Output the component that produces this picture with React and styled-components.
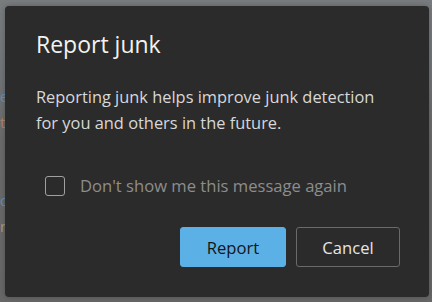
import React from 'react';
import styled, { createGlobalStyle } from 'styled-components';

const GlobalStyle = createGlobalStyle`
  html, body {
    margin: 0;
    padding: 0;
    width: 432px;
    height: 302px;
    overflow: hidden;
    background: #6c6c6c;
  }
  * { box-sizing: border-box; }
`;

const Backdrop = styled.div`
  position: relative;
  width: 432px;
  height: 302px;
  padding: 6px 3px 5px 5px;
  background: linear-gradient(180deg, #7a7d80 0px, #74777a 60px, #6b6b6b 140px, #686868 302px);
  font-family: "Open Sans", "Noto Sans", sans-serif;
`;

const BehindText = styled.span`
  position: absolute;
  left: 0;
  top: ${p => p.$top}px;
  font-size: 15px;
  color: ${p => p.$color};
  opacity: 0.8;
`;

const Dialog = styled.div`
  position: relative;
  height: 100%;
  background: #2b2b2b;
  border-radius: 4px;
  padding: 22px 29px 30px 31px;
  display: flex;
  flex-direction: column;
  box-shadow: 0 0 6px rgba(0, 0, 0, 0.25);
`;

const Title = styled.h1`
  margin: 0;
  font-size: 23px;
  font-weight: 400;
  line-height: 32px;
  color: #f2f2f2;
`;

const Message = styled.p`
  margin: 24px 0 0;
  font-size: 16.4px;
  line-height: 26px;
  color: #d8d8d8;
`;

const CheckRow = styled.label`
  display: flex;
  align-items: center;
  gap: 15px;
  margin: 38px 0 0 9px;
  font-size: 16.6px;
  color: #8d8d8d;
`;

const Box = styled.span`
  width: 20px;
  height: 20px;
  border: 1px solid #a0a0a0;
  border-radius: 3px;
`;

const Actions = styled.div`
  margin-top: auto;
  display: flex;
  justify-content: flex-end;
  gap: 10px;
`;

const Button = styled.button`
  height: 40px;
  width: ${p => p.$w}px;
  border-radius: 3px;
  font-family: inherit;
  font-size: 16.6px;
  padding: 0;
  border: 1px solid ${p => (p.$primary ? '#5bb0e6' : '#6a6a6a')};
  background: ${p => (p.$primary ? '#5bb0e6' : '#2b2b2b')};
  color: ${p => (p.$primary ? '#141414' : '#e6e6e6')};
`;

export default function App() {
  return (
    <>
      <GlobalStyle />
      <Backdrop>
        <BehindText $top={86} $color="#5c9ad0">e</BehindText>
        <BehindText $top={112} $color="#c08a6a">t</BehindText>
        <BehindText $top={190} $color="#5c9ad0">o</BehindText>
        <BehindText $top={216} $color="#b8a88a">n</BehindText>
        <Dialog>
          <Title>Report junk</Title>
          <Message>
            Reporting junk helps improve junk detection
            <br />
            for you and others in the future.
          </Message>
          <CheckRow>
            <Box />
            Don't show me this message again
          </CheckRow>
          <Actions>
            <Button $primary $w={106}>Report</Button>
            <Button $w={104}>Cancel</Button>
          </Actions>
        </Dialog>
      </Backdrop>
    </>
  );
}
